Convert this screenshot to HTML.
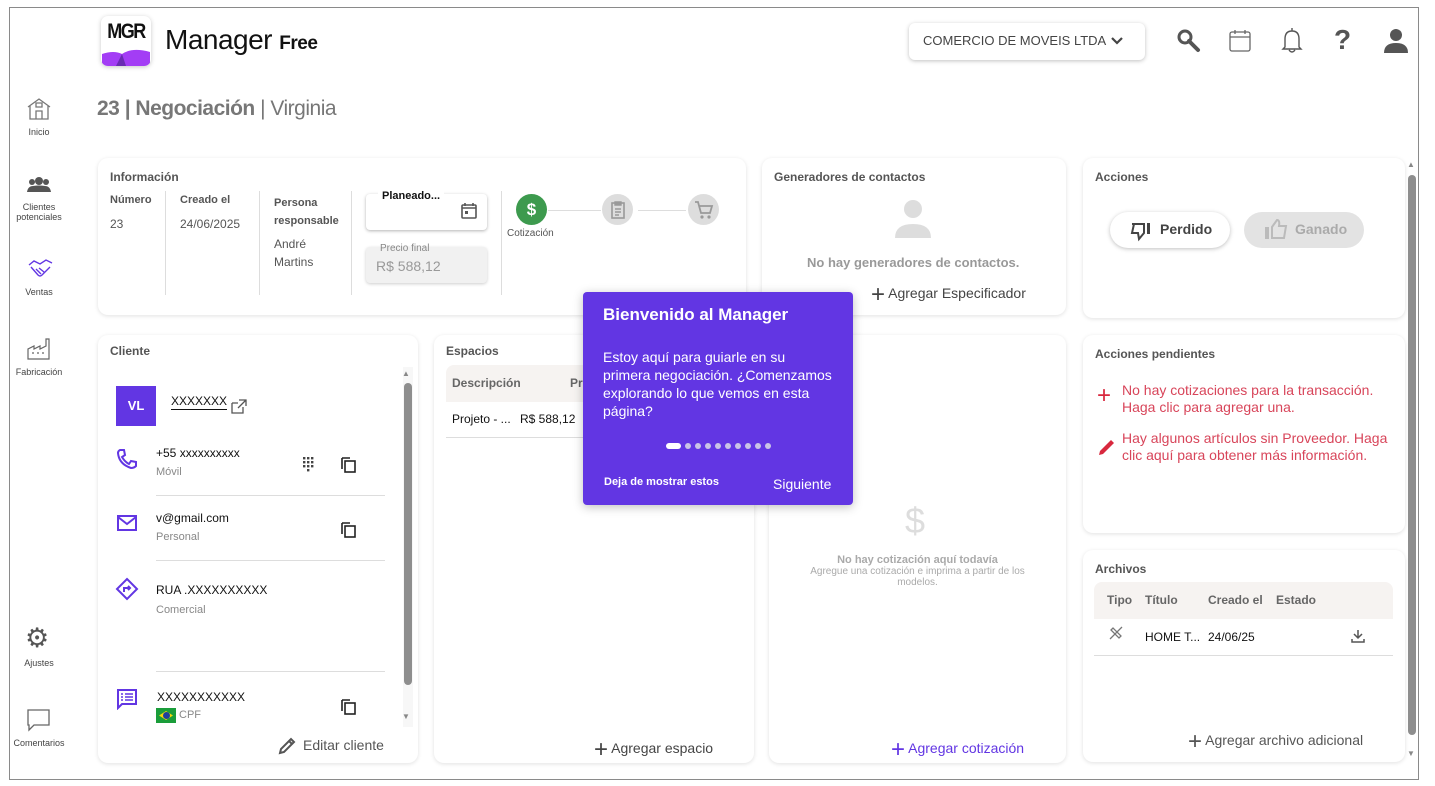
<!DOCTYPE html>
<html><head><meta charset="utf-8"><style>
*{box-sizing:border-box;margin:0;padding:0}
body{width:1435px;height:786px;background:#fff;font-family:"Liberation Sans",sans-serif;position:relative;overflow:hidden;color:#333}
.a{position:absolute}
.frame{left:9px;top:7px;width:1410px;height:773px;border:1px solid #8a8a8a}
.card{position:absolute;background:#fff;border-radius:10px;box-shadow:0 1px 4px rgba(0,0,0,.12)}
.h{font-size:12px;font-weight:bold;color:#555}
.lbl{font-size:11px;color:#555;font-weight:bold}
.val{font-size:12px;color:#555}
.nav{position:absolute;width:70px;left:4px;text-align:center;font-size:9px;color:#444}
.vl{position:absolute;width:1px;background:#ddd}
.hl{position:absolute;height:1px;background:#ddd}
.add{position:absolute;font-size:14px}
.add span{font-size:24px;vertical-align:-4px;font-weight:300}
</style></head><body>
<div class="a frame"></div>

<!-- logo -->
<div class="a" style="left:101px;top:16px;width:50px;height:50px;border-radius:7px;background:#fff;box-shadow:0 1px 5px rgba(0,0,0,.22);overflow:hidden">
 <div class="a" style="left:0;top:5px;width:50px;text-align:center;font-weight:bold;font-size:18px;color:#111;letter-spacing:-1.5px;transform:scaleY(1.2)">MGR</div>
 <svg class="a" style="left:1px;top:32px" width="48" height="18"><path d="M0 6 Q12 2 20 6 Q30 -1 48 4 L48 18 L0 18Z" fill="#a33df5"/><path d="M14 18 L20 6 L24 18Z" fill="#6a2bb3"/></svg>
</div>
<div class="a" style="left:165px;top:24px;font-size:28px;color:#111;letter-spacing:-0.5px">Manager <span style="font-size:19px;font-weight:bold">Free</span></div>

<!-- company dropdown -->
<div class="a" style="left:909px;top:23px;width:236px;height:37px;border-radius:6px;box-shadow:0 1px 4px rgba(0,0,0,.25);background:#fff;font-size:13px;color:#444;padding:10px 0 0 14px">COMERCIO DE MOVEIS LTDA</div>
<svg class="a" style="left:1110px;top:35px" width="14" height="12"><path d="M2 3 L7 8 L12 3" fill="none" stroke="#444" stroke-width="2.2"/></svg>
<svg class="a" style="left:1176px;top:28px" width="26" height="26"><circle cx="9" cy="9" r="6" fill="none" stroke="#555" stroke-width="3"/><path d="M13 13 L22 22" stroke="#555" stroke-width="4" stroke-linecap="round"/></svg>
<svg class="a" style="left:1228px;top:28px" width="26" height="26"><rect x="2" y="4" width="20" height="19" rx="2" fill="none" stroke="#666" stroke-width="1.3"/><path d="M2 9H22M7 2V6M17 2V6" stroke="#666" stroke-width="1.3"/></svg>
<svg class="a" style="left:1280px;top:27px" width="26" height="28"><path d="M5 20 L5 12 Q5 4 12 4 Q19 4 19 12 L19 20 L21 22 L3 22Z M9 23 Q12 27 15 23 M12 1V4" fill="none" stroke="#555" stroke-width="1.4"/></svg>
<div class="a" style="left:1334px;top:24px;font-size:28px;font-weight:bold;color:#555">?</div>
<svg class="a" style="left:1382px;top:27px" width="28" height="28"><circle cx="14" cy="8" r="6" fill="#555"/><path d="M2 26 Q2 16 14 16 Q26 16 26 26Z" fill="#555"/></svg>

<!-- sidebar -->
<svg class="a" style="left:26px;top:97px" width="26" height="24"><path d="M2 10 L13 2 L24 10 M4 9 V22 H22 V9 M10 22V14H16V22 M10 6H16V10H10Z" fill="none" stroke="#777" stroke-width="1.3"/></svg>
<div class="nav" style="top:127px">Inicio</div>
<svg class="a" style="left:26px;top:175px" width="26" height="18"><circle cx="13" cy="6" r="4" fill="#555"/><circle cx="6" cy="7" r="3" fill="#555"/><circle cx="20" cy="7" r="3" fill="#555"/><path d="M1 17 Q2 11 7 11 Q13 10 19 11 Q24 11 25 17Z" fill="#555"/></svg>
<div class="nav" style="top:202px;line-height:10px">Clientes<br>potenciales</div>
<svg class="a" style="left:28px;top:257px" width="26" height="24"><path d="M1 8 L6 4 L12 7 L18 3 L24 6 M3 10 L10 18 Q12 20 14 18 L22 10 M8 12 L13 17 M11 11 L16 15" fill="none" stroke="#6236e3" stroke-width="1.4"/></svg>
<div class="nav" style="top:287px">Ventas</div>
<svg class="a" style="left:26px;top:337px" width="26" height="24"><path d="M2 22 V12 L8 9 V12 L14 9 V12 L20 9 V2 H23 V22Z M6 16H8M11 16H13M16 16H18" fill="none" stroke="#666" stroke-width="1.2"/></svg>
<div class="nav" style="top:367px">Fabricación</div>
<div class="a" style="left:25px;top:625px;font-size:27px;color:#555;line-height:27px">&#9881;</div>
<div class="nav" style="top:658px">Ajustes</div>
<svg class="a" style="left:26px;top:708px" width="26" height="24"><path d="M2 2 H23 V17 H8 L3 22 V17 H2Z" fill="none" stroke="#666" stroke-width="1.3"/></svg>
<div class="nav" style="top:738px">Comentarios</div>

<!-- title -->
<div class="a" style="left:97px;top:97px;font-size:21px;color:#777;letter-spacing:-0.5px"><b>23 | Negociación</b> | Virginia</div>

<!-- Info card -->
<div class="card" style="left:98px;top:158px;width:648px;height:157px"></div>
<div class="a h" style="left:110px;top:170px">Información</div>
<div class="a lbl" style="left:110px;top:194px">Número</div>
<div class="a val" style="left:110px;top:217px">23</div>
<div class="vl" style="left:165px;top:191px;height:104px"></div>
<div class="a lbl" style="left:180px;top:194px">Creado el</div>
<div class="a val" style="left:180px;top:217px">24/06/2025</div>
<div class="vl" style="left:259px;top:191px;height:104px"></div>
<div class="a lbl" style="left:274px;top:194px;line-height:18px">Persona<br>responsable</div>
<div class="a val" style="left:274px;top:235px;line-height:18px">André<br>Martins</div>
<div class="vl" style="left:351px;top:191px;height:104px"></div>
<div class="a" style="left:366px;top:194px;width:121px;height:36px;border-radius:4px;box-shadow:0 1px 3px rgba(0,0,0,.3);background:#fff"></div>
<div class="a" style="left:378px;top:190px;background:#fff;padding:0 4px;font-size:11px;font-weight:bold;color:#111">Planeado...</div>
<svg class="a" style="left:460px;top:202px" width="18" height="18"><rect x="2" y="3" width="14" height="13" rx="1" fill="none" stroke="#555" stroke-width="1.6"/><path d="M2 6H16M5 1V4M13 1V4" stroke="#555" stroke-width="1.6"/><rect x="5" y="9" width="3" height="3" fill="#555"/></svg>
<div class="a" style="left:366px;top:247px;width:121px;height:36px;border-radius:4px;background:#f1f1f1;box-shadow:0 1px 3px rgba(0,0,0,.2)"></div>
<div class="a" style="left:380px;top:243px;font-size:10px;color:#888">Precio final</div>
<div class="a" style="left:376px;top:258px;font-size:14px;color:#999">R$ 588,12</div>
<div class="vl" style="left:501px;top:191px;height:104px"></div>
<div class="a" style="left:516px;top:194px;width:31px;height:31px;border-radius:50%;background:#3d9a4e;color:#fff;font-weight:bold;font-size:17px;text-align:center;line-height:31px">$</div>
<div class="a" style="left:548px;top:210px;width:53px;height:1px;background:#ddd"></div>
<div class="a" style="left:602px;top:194px;width:31px;height:31px;border-radius:50%;background:#ddd"></div>
<svg class="a" style="left:609px;top:200px" width="18" height="20"><rect x="3" y="3" width="12" height="15" fill="none" stroke="#999" stroke-width="1.6"/><path d="M6 2H12V5H6Z M6 9H12M6 12H12M6 15H10" stroke="#999" stroke-width="1.4" fill="#999"/></svg>
<div class="a" style="left:638px;top:210px;width:48px;height:1px;background:#ddd"></div>
<div class="a" style="left:688px;top:194px;width:31px;height:31px;border-radius:50%;background:#ddd"></div>
<svg class="a" style="left:694px;top:200px" width="20" height="20"><path d="M1 2H4L7 13H16L18 6H5" fill="none" stroke="#999" stroke-width="1.8"/><circle cx="8" cy="17" r="1.6" fill="#999"/><circle cx="15" cy="17" r="1.6" fill="#999"/></svg>
<div class="a" style="left:507px;top:228px;font-size:10px;color:#555">Cotización</div>

<!-- Contacts card -->
<div class="card" style="left:762px;top:158px;width:304px;height:157px"></div>
<div class="a h" style="left:774px;top:170px">Generadores de contactos</div>
<svg class="a" style="left:893px;top:198px" width="40" height="42"><circle cx="20" cy="11" r="9" fill="#ddd"/><path d="M2 40 Q2 26 20 26 Q38 26 38 40Z" fill="#ddd"/></svg>
<div class="a" style="left:807px;top:255px;font-size:13px;color:#999;font-weight:bold">No hay generadores de contactos.</div>
<div class="add" style="left:871px;top:281px;color:#444"><span>+</span> Agregar Especificador</div>

<!-- Acciones card -->
<div class="card" style="left:1083px;top:158px;width:322px;height:160px"></div>
<div class="a h" style="left:1095px;top:170px">Acciones</div>
<div class="a" style="left:1110px;top:212px;width:120px;height:36px;border-radius:18px;background:#fff;box-shadow:0 1px 4px rgba(0,0,0,.25);font-size:14px;font-weight:bold;color:#444;padding:9px 0 0 50px">Perdido</div>
<svg class="a" style="left:1130px;top:220px" width="24" height="22"><path d="M2 4 H14 V13 L9 19 L8 13 H2 L4 4" fill="none" stroke="#444" stroke-width="2"/><rect x="17" y="3" width="3" height="11" fill="#444"/></svg>
<div class="a" style="left:1244px;top:212px;width:120px;height:36px;border-radius:18px;background:#e3e3e3;font-size:14px;font-weight:bold;color:#aaa;padding:9px 0 0 51px">Ganado</div>
<svg class="a" style="left:1264px;top:218px" width="26" height="22"><rect x="1" y="9" width="4" height="12" fill="#bbb"/><path d="M8 9 L13 2 Q16 2 15 8 H22 L20 20 H8Z" fill="none" stroke="#bbb" stroke-width="2"/></svg>

<!-- Cliente card -->
<div class="card" style="left:98px;top:335px;width:320px;height:428px"></div>
<div class="a h" style="left:110px;top:344px">Cliente</div>
<div class="a" style="left:116px;top:386px;width:40px;height:40px;background:#6236e3;color:#fff;font-weight:bold;font-size:13px;text-align:center;line-height:40px">VL</div>
<div class="a" style="left:171px;top:394px;font-size:12px;color:#111;border-bottom:1px solid #111;padding-bottom:1px;width:56px">XXXXXXX</div>
<svg class="a" style="left:230px;top:398px" width="18" height="16"><path d="M2 5 H8 M2 5 V15 H13 V9 M9 2 H16 V8 M16 2 L8 10" fill="none" stroke="#555" stroke-width="1.3"/></svg>
<svg class="a" style="left:116px;top:448px" width="22" height="22"><path d="M4 2 L8 2 L9 7 L6 9 Q9 14 13 16 L15 13 L20 14 L20 18 Q18 20 15 20 Q3 16 2 5 Q2 3 4 2Z" fill="none" stroke="#6236e3" stroke-width="2"/></svg>
<div class="a" style="left:156px;top:446px;font-size:12px;color:#111">+55 xxxxxxxxxx</div>
<div class="a" style="left:156px;top:466px;font-size:11px;color:#888">Móvil</div>
<svg class="a" style="left:302px;top:456px" width="14" height="16"><g fill="#444"><rect x="1" y="1" width="2.4" height="2.4"/><rect x="5" y="1" width="2.4" height="2.4"/><rect x="9" y="1" width="2.4" height="2.4"/><rect x="1" y="5" width="2.4" height="2.4"/><rect x="5" y="5" width="2.4" height="2.4"/><rect x="9" y="5" width="2.4" height="2.4"/><rect x="1" y="9" width="2.4" height="2.4"/><rect x="5" y="9" width="2.4" height="2.4"/><rect x="9" y="9" width="2.4" height="2.4"/><rect x="5" y="13" width="2.4" height="2.4"/></g></svg>
<svg class="a" style="left:340px;top:456px" width="18" height="18"><path d="M2 2 H10 M2 2 V13" stroke="#222" stroke-width="1.6" fill="none"/><rect x="5" y="5" width="10" height="11" fill="none" stroke="#222" stroke-width="1.6"/></svg>
<div class="hl" style="left:156px;top:495px;width:229px"></div>
<svg class="a" style="left:116px;top:514px" width="22" height="18"><rect x="2" y="2" width="18" height="14" fill="none" stroke="#6236e3" stroke-width="2"/><path d="M2 3 L11 10 L20 3" fill="none" stroke="#6236e3" stroke-width="2"/></svg>
<div class="a" style="left:156px;top:511px;font-size:12px;color:#111">v@gmail.com</div>
<div class="a" style="left:156px;top:531px;font-size:11px;color:#888">Personal</div>
<svg class="a" style="left:340px;top:521px" width="18" height="18"><path d="M2 2 H10 M2 2 V13" stroke="#222" stroke-width="1.6" fill="none"/><rect x="5" y="5" width="10" height="11" fill="none" stroke="#222" stroke-width="1.6"/></svg>
<div class="hl" style="left:156px;top:560px;width:229px"></div>
<svg class="a" style="left:115px;top:577px" width="24" height="24"><path d="M12 2 L22 12 L12 22 L2 12Z" fill="none" stroke="#6236e3" stroke-width="2"/><path d="M9 15 V11 H15 M13 9 L15 11 L13 13" fill="none" stroke="#6236e3" stroke-width="2"/></svg>
<div class="a" style="left:156px;top:583px;font-size:12px;color:#111">RUA .XXXXXXXXXX</div>
<div class="a" style="left:156px;top:604px;font-size:11px;color:#888">Comercial</div>
<div class="hl" style="left:156px;top:671px;width:229px"></div>
<svg class="a" style="left:116px;top:688px" width="24" height="22"><path d="M2 2 H20 V16 H6 L2 20Z" fill="none" stroke="#6236e3" stroke-width="2"/><path d="M5 6H7M9 6H17M5 9H7M9 9H17M5 12H7M9 12H17" stroke="#6236e3" stroke-width="1.5"/></svg>
<div class="a" style="left:157px;top:690px;font-size:12px;color:#111">XXXXXXXXXXX</div>
<div class="a" style="left:156px;top:708px;width:20px;height:15px;background:#1a9d3a"><div class="a" style="left:3px;top:3px;width:14px;height:9px;background:#f5d60a;clip-path:polygon(50% 0,100% 50%,50% 100%,0 50%)"></div><div class="a" style="left:7px;top:4px;width:7px;height:7px;border-radius:50%;background:#1d3f9b"></div></div>
<div class="a" style="left:179px;top:709px;font-size:11px;color:#888">CPF</div>
<svg class="a" style="left:340px;top:698px" width="18" height="18"><path d="M2 2 H10 M2 2 V13" stroke="#222" stroke-width="1.6" fill="none"/><rect x="5" y="5" width="10" height="11" fill="none" stroke="#222" stroke-width="1.6"/></svg>
<div class="a" style="left:403px;top:367px;width:10px;height:360px;background:#f7f7f7"></div>
<div class="a" style="left:402px;top:369px;font-size:8px;color:#888">&#9650;</div>
<div class="a" style="left:404px;top:383px;width:8px;height:302px;border-radius:4px;background:#8e8e8e"></div>
<div class="a" style="left:402px;top:712px;font-size:8px;color:#888">&#9660;</div>
<svg class="a" style="left:277px;top:736px" width="20" height="20"><path d="M3 17 L4 13 L14 3 L17 6 L7 16Z M12 5 L15 8" fill="none" stroke="#555" stroke-width="2"/></svg>
<div class="a" style="left:303px;top:737px;font-size:14px;color:#555">Editar cliente</div>

<!-- Espacios card -->
<div class="card" style="left:434px;top:335px;width:320px;height:428px"></div>
<div class="a h" style="left:446px;top:344px">Espacios</div>
<div class="a" style="left:446px;top:365px;width:300px;height:37px;background:#f6f3f1;border-radius:8px 8px 0 0"></div>
<div class="a" style="left:452px;top:376px;font-size:12px;font-weight:bold;color:#666">Descripción</div>
<div class="a" style="left:570px;top:376px;font-size:12px;font-weight:bold;color:#666">Pr</div>
<div class="a" style="left:452px;top:412px;font-size:12px;color:#111">Projeto - ...</div>
<div class="a" style="left:520px;top:412px;font-size:12px;color:#111">R$ 588,12</div>
<div class="hl" style="left:446px;top:437px;width:300px"></div>
<div class="add" style="left:594px;top:736px;color:#444"><span>+</span> Agregar espacio</div>

<!-- Cotización card -->
<div class="card" style="left:769px;top:335px;width:297px;height:428px"></div>
<div class="a" style="left:905px;top:500px;font-size:36px;color:#ddd">$</div>
<div class="a" style="left:770px;top:554px;width:295px;text-align:center;font-size:11px;color:#aaa;font-weight:bold">No hay cotización aquí todavía</div>
<div class="a" style="left:800px;top:566px;width:235px;text-align:center;font-size:10px;color:#aaa;line-height:11px">Agregue una cotización e imprima a partir de los modelos.</div>
<div class="add" style="left:891px;top:736px;color:#6236e3"><span>+</span> Agregar cotización</div>

<!-- Acciones pendientes -->
<div class="card" style="left:1083px;top:335px;width:322px;height:198px"></div>
<div class="a h" style="left:1095px;top:347px">Acciones pendientes</div>
<div class="a" style="left:1097px;top:384px;font-size:24px;color:#d8283e;line-height:24px">+</div>
<div class="a" style="left:1122px;top:382px;font-size:14px;color:#d8455a;line-height:17px;width:270px">No hay cotizaciones para la transacción. Haga clic para agregar una.</div>
<svg class="a" style="left:1096px;top:436px" width="22" height="22"><path d="M3 19 L4 15 L15 4 L18 7 L7 18Z" fill="#d8283e"/></svg>
<div class="a" style="left:1122px;top:430px;font-size:14px;color:#d8455a;line-height:17px;width:270px">Hay algunos artículos sin Proveedor. Haga clic aquí para obtener más información.</div>

<!-- Archivos -->
<div class="card" style="left:1083px;top:550px;width:322px;height:212px"></div>
<div class="a h" style="left:1095px;top:562px">Archivos</div>
<div class="a" style="left:1094px;top:582px;width:299px;height:37px;background:#f6f3f1;border-radius:8px 8px 0 0"></div>
<div class="a" style="left:1107px;top:593px;font-size:12px;font-weight:bold;color:#666">Tipo</div>
<div class="a" style="left:1145px;top:593px;font-size:12px;font-weight:bold;color:#666">Título</div>
<div class="a" style="left:1208px;top:593px;font-size:12px;font-weight:bold;color:#666">Creado el</div>
<div class="a" style="left:1276px;top:593px;font-size:12px;font-weight:bold;color:#666">Estado</div>
<svg class="a" style="left:1108px;top:625px" width="16" height="16"><path d="M2 14 L14 2 M3 5 L5 3 L13 11 L11 13Z" fill="none" stroke="#777" stroke-width="1.3"/></svg>
<div class="a" style="left:1145px;top:630px;font-size:12px;color:#111">HOME T...</div>
<div class="a" style="left:1208px;top:630px;font-size:12px;color:#111">24/06/25</div>
<svg class="a" style="left:1351px;top:629px" width="14" height="14"><path d="M7 1 V9 M3 5 L7 9 L11 5 M1 10 V13 H13 V10" fill="none" stroke="#555" stroke-width="1.5"/></svg>
<div class="hl" style="left:1094px;top:655px;width:299px"></div>
<div class="add" style="left:1188px;top:728px;color:#555"><span>+</span> Agregar archivo adicional</div>

<!-- page scrollbar -->
<div class="a" style="left:1407px;top:160px;font-size:8px;color:#888">&#9650;</div>
<div class="a" style="left:1408px;top:175px;width:8px;height:560px;border-radius:4px;background:#8e8e8e"></div>
<div class="a" style="left:1407px;top:749px;font-size:8px;color:#888">&#9660;</div>

<!-- popup -->
<div class="a" style="left:583px;top:292px;width:270px;height:213px;background:#6236e3;border-radius:4px;box-shadow:0 2px 10px rgba(0,0,0,.25);color:#fff">
 <div class="a" style="left:20px;top:13px;font-size:17px;font-weight:bold">Bienvenido al Manager</div>
 <div class="a" style="left:20px;top:56px;width:232px;font-size:14px;line-height:18px">Estoy aquí para guiarle en su primera negociación. ¿Comenzamos explorando lo que vemos en esta página?</div>
 <div class="a" style="left:83px;top:151px;width:15px;height:6px;border-radius:3px;background:#fff"></div>
 <div class="a" style="left:102px;top:151px;font-size:0">
  <span style="display:inline-block;width:6px;height:6px;border-radius:50%;background:#c9c3e6;margin-right:4px"></span><span style="display:inline-block;width:6px;height:6px;border-radius:50%;background:#c9c3e6;margin-right:4px"></span><span style="display:inline-block;width:6px;height:6px;border-radius:50%;background:#c9c3e6;margin-right:4px"></span><span style="display:inline-block;width:6px;height:6px;border-radius:50%;background:#c9c3e6;margin-right:4px"></span><span style="display:inline-block;width:6px;height:6px;border-radius:50%;background:#c9c3e6;margin-right:4px"></span><span style="display:inline-block;width:6px;height:6px;border-radius:50%;background:#c9c3e6;margin-right:4px"></span><span style="display:inline-block;width:6px;height:6px;border-radius:50%;background:#c9c3e6;margin-right:4px"></span><span style="display:inline-block;width:6px;height:6px;border-radius:50%;background:#c9c3e6;margin-right:4px"></span><span style="display:inline-block;width:6px;height:6px;border-radius:50%;background:#c9c3e6"></span>
 </div>
 <div class="a" style="left:21px;top:184px;font-size:11px;font-weight:bold">Deja de mostrar estos</div>
 <div class="a" style="left:190px;top:184px;font-size:14px">Siguiente</div>
</div>
</body></html>
